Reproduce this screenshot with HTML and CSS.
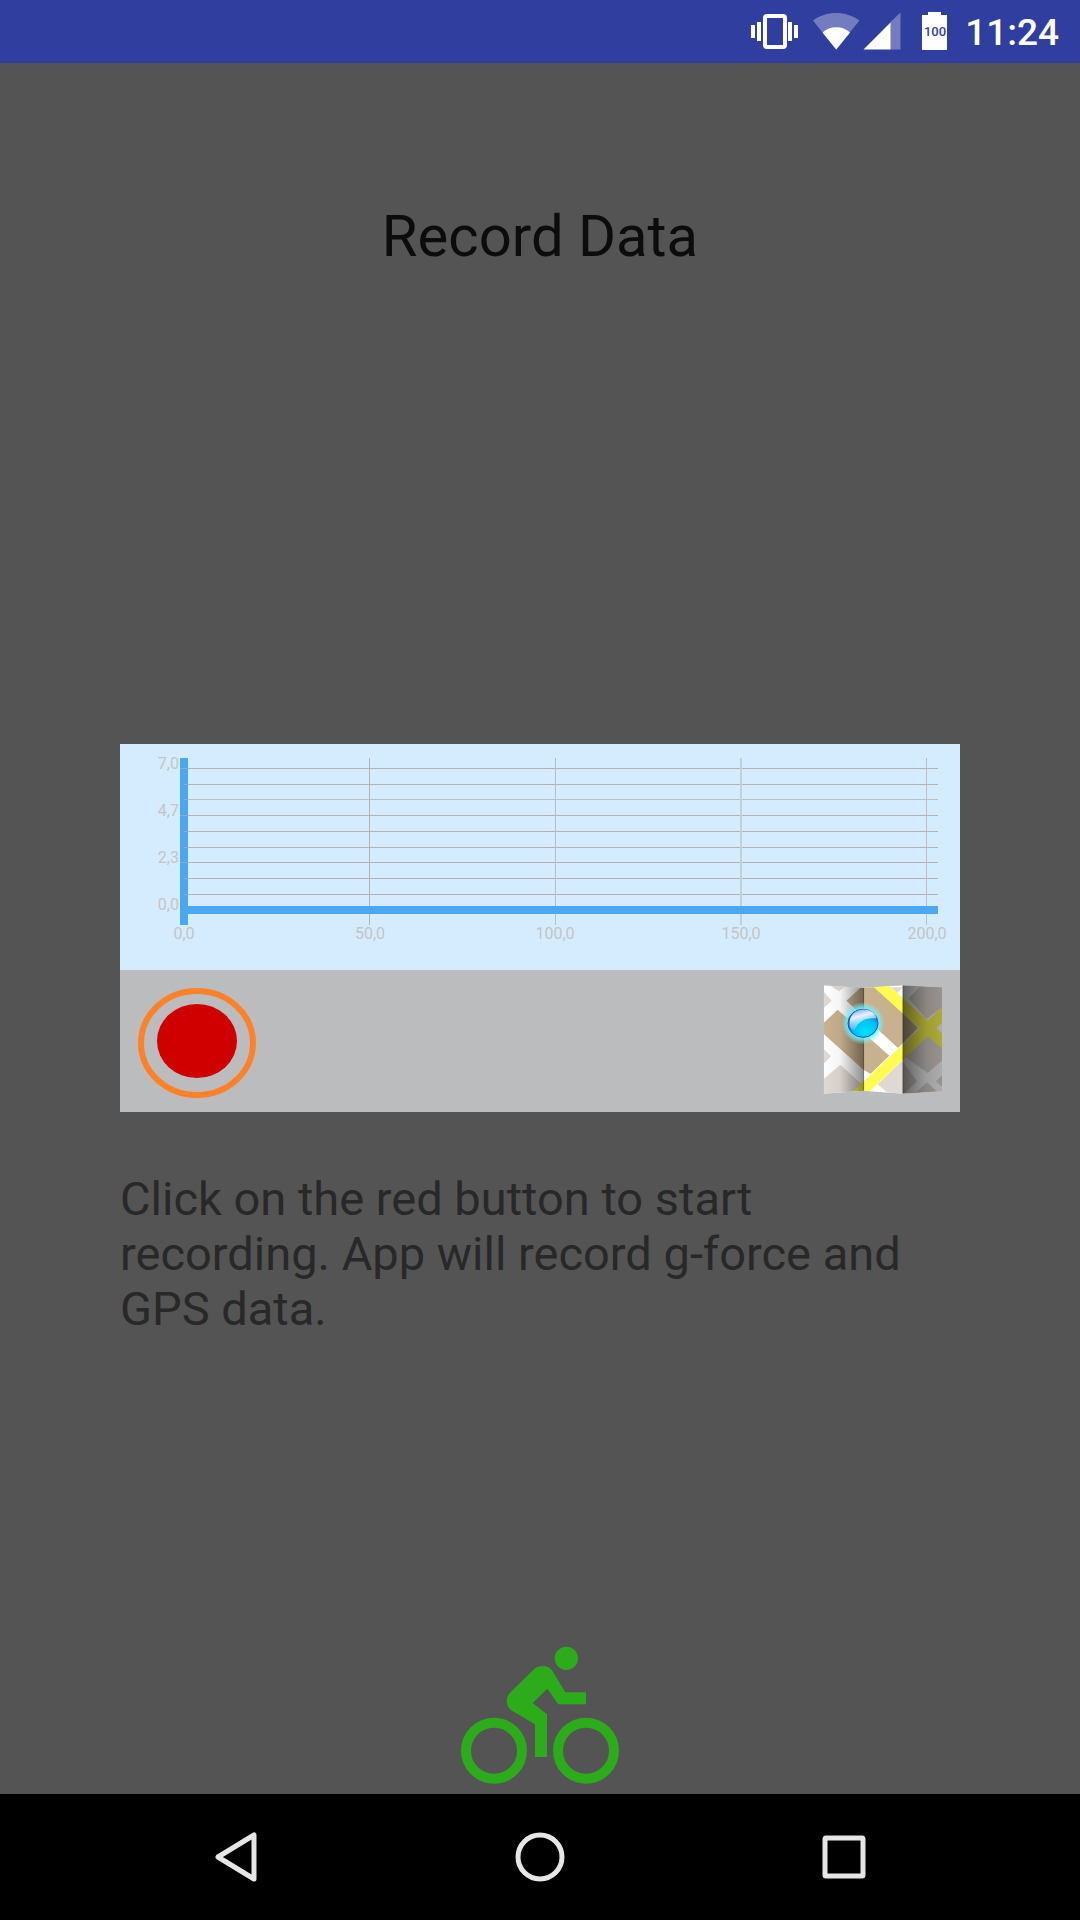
FILE: index.html
```html
<!DOCTYPE html>
<html lang="en">
<head>
<meta charset="utf-8">
<meta name="viewport" content="width=device-width, initial-scale=1">
<title>Record Data</title>
<link rel="stylesheet" href="styles.css">
</head>
<body>
<header class="status-bar">
  <svg class="status-icon" width="48" height="38" viewBox="0 0 48 38" aria-label="Vibrate" role="img">
    <rect x="14" y="4" width="20" height="31" rx="2" fill="none" stroke="#fff" stroke-width="4"/>
    <path fill="#fff" d="M0 13h4v13H0zM6 10h4v19H6zM37 10h4v19h-4zM43 13h4v13h-4z"/>
  </svg>
  <div class="signals">
    <svg class="status-icon" width="47" height="38" viewBox="0 0 47 38" aria-label="Wi-Fi" role="img">
      <path fill="#fff" fill-opacity=".32" d="M23.200 37.500L0 8.500C13-1.500 33-1.500 46.400 8.500z"/>
      <path fill="#fff" d="M23.200 37.500L9.500 20.500C17 13.500 29.500 13.500 37 20.500z"/>
    </svg>
    <svg class="status-icon" width="38" height="38" viewBox="0 0 38 38" aria-label="Mobile signal" role="img">
      <path fill="#fff" fill-opacity=".32" d="M27 10.500L37.500.500v37H27z"/>
      <path fill="#fff" d="M.500 37.500L27.500 10.500v27z"/>
    </svg>
  </div>
  <svg class="status-icon battery" width="25" height="38" viewBox="0 0 25 38" aria-label="Battery" role="img">
    <path fill="#fff" d="M6 0h13v3h6v35H0V3h6z"/>
    <text class="battery-level" x="13" y="24">100</text>
  </svg>
  <time class="clock">11:24</time>
</header>

<main class="screen">
  <h1 class="title">Record Data</h1>

  <section class="recorder">
    <svg class="chart" viewBox="0 0 840 226" role="img" aria-label="G-force chart">
      <clipPath id="plot"><rect width="826" height="226"/></clipPath>
      <path class="axis" d="M60 14h8v167h-8z"/>
      <path class="grid" d="M68 24.500H818M68 40.500H818M68 71.500H818M68 87.500H818M68 103.500H818M68 118.500H818M68 134.500H818M68 150.500H818M249.500 14V181"/>
      <path class="grid faint" d="M68 55.500H818M435.500 14V181M806.500 14V181"/>
      <path class="grid wide" d="M621 14V181"/>
      <path class="grid overlay" d="M60 24.500h8M64 40.500h4M64 55.500h4M60 71.500h8M64 87.500h4M64 103.500h4M60 118.500h8M64 134.500h4M64 150.500h4"/>
      <path class="axis" d="M64 162h754v8H64z"/>
      <g class="label label-y">
        <text x="59" y="25">7,0</text>
        <text x="59" y="72">4,7</text>
        <text x="59" y="119">2,3</text>
        <text x="59" y="166">0,0</text>
      </g>
      <g class="label label-x" clip-path="url(#plot)">
        <text x="64" y="195">0,0</text>
        <text x="250" y="195">50,0</text>
        <text x="435" y="195">100,0</text>
        <text x="621" y="195">150,0</text>
        <text x="807" y="195">200,0</text>
      </g>
    </svg>
    <div class="toolbar">
      <button class="tool" type="button" aria-label="Record">
        <svg width="118" height="114" viewBox="0 0 118 114">
          <ellipse cx="59" cy="59" rx="56" ry="52" fill="none" stroke="#ff8127" stroke-width="6"/>
          <ellipse cx="59" cy="57" rx="40" ry="37" fill="#d00000"/>
        </svg>
      </button>
      <button class="tool" type="button" aria-label="Map">
        <svg width="119" height="112" viewBox="68 76 357 336">
          <defs>
            <clipPath id="sheet"><path d="M70 77L190 85 307 77 426 83V395L307 402 190 393 70 402z"/></clipPath>
            <linearGradient id="fold-left"><stop offset="0" stop-opacity="0"/><stop offset=".4" stop-opacity=".04"/><stop offset="1" stop-opacity=".45"/></linearGradient>
            <linearGradient id="fold-right"><stop offset="0" stop-opacity=".62"/><stop offset=".6" stop-opacity=".38"/><stop offset="1" stop-opacity=".32"/></linearGradient>
            <radialGradient id="glow"><stop offset=".7" stop-color="#5ff4ff" stop-opacity=".9"/><stop offset="1" stop-color="#8ff8ff" stop-opacity="0"/></radialGradient>
            <radialGradient id="ball" cx=".6" cy=".8" r=".75"><stop offset="0" stop-color="#00e4ff"/><stop offset=".55" stop-color="#00bdff"/><stop offset="1" stop-color="#1a50c8"/></radialGradient>
            <linearGradient id="shine" x1=".2" y1="0" x2=".55" y2="1"><stop offset="0" stop-color="#fff" stop-opacity=".5"/><stop offset=".35" stop-color="#fff" stop-opacity=".9"/><stop offset="1" stop-color="#fff" stop-opacity="0"/></linearGradient>
          </defs>
          <g clip-path="url(#sheet)">
            <path fill="#fff" d="M70 76h357v327H70z"/>
            <path fill="#e0d8d2" d="M86 76h52l-22 19zM70 96l24 27-24 23zM70 268l22 22-22 22zM120 315l96 88H70V358zM305 304l46 61-42 38h-44l-33-29zM272 83h36l-18 18zM360 80h67v62l-49 36-54-62zM427 264l-49-44-72 66 76 54 45-39zM380 368l38 35h-76zM427 344l-20 21 20 18z"/>
            <path fill="#c8b18f" d="M138 123l46-42h42l127 124-60 60zM70 190l42-40 155 138-56 54-21-11L70 223z"/>
            <path fill="none" stroke="#fffb50" stroke-width="34" d="M232 70L440 258M160 417L440 152"/>
            <path fill="url(#fold-left)" d="M70 76h121v327H70z"/>
            <path fill="url(#fold-right)" d="M307 76h120v327H307z"/>
            <path fill="none" stroke="#000" stroke-opacity=".3" stroke-width="2" d="M190 84V394M308 76V403"/>
          </g>
          <circle cx="188" cy="191" r="64" fill="url(#glow)"/>
          <ellipse cx="188" cy="191" rx="45" ry="42" fill="url(#ball)" stroke="#1857b8" stroke-width="3"/>
          <path fill="url(#shine)" d="M148 196C143 138 222 138 228 176C196 173 175 184 163 211C156 212 149 205 148 196z"/>
        </svg>
      </button>
    </div>
  </section>

  <p class="hint">Click on the red button to start recording. App will record g-force and GPS data.</p>

  <svg class="cyclist" width="158" height="138" viewBox="63 48 474 414" aria-hidden="true">
    <g fill="none" stroke="#2cab1b" stroke-width="30">
      <circle cx="162" cy="362" r="84"/>
      <circle cx="438" cy="362" r="84"/>
    </g>
    <circle cx="379" cy="85" r="35" fill="#2cab1b"/>
    <path fill="#2cab1b" d="M285 381V283L217 243C196 229 196 204 210 188L285 115C296 105 324 104 336 121L376 187H438V223H355L322 176 278 219 321 253V381z"/>
  </svg>
</main>

<nav class="nav-bar" aria-label="System">
  <button class="nav-button" type="button" aria-label="Back">
    <svg width="50" height="50" viewBox="0 0 50 50"><path d="M7 25L43 3V47z"/></svg>
  </button>
  <button class="nav-button" type="button" aria-label="Home">
    <svg width="50" height="50" viewBox="0 0 50 50"><circle cx="25" cy="25" r="22"/></svg>
  </button>
  <button class="nav-button" type="button" aria-label="Recent apps">
    <svg width="50" height="50" viewBox="0 0 50 50"><rect x="6" y="6" width="38" height="38" rx="1"/></svg>
  </button>
</nav>
</body>
</html>
```
FILE: styles.css
```css
* {
  box-sizing: border-box;
}

body {
  margin: 0;
  min-height: 100vh;
  display: flex;
  flex-direction: column;
  background: #545454;
  font-family: Roboto, "Liberation Sans", sans-serif;
}

svg {
  display: block;
}

button {
  padding: 0;
  border: 0;
  background: none;
  cursor: pointer;
}

.status-bar {
  height: 63px;
  padding: 12px 21px 0;
  display: flex;
  align-items: flex-start;
  justify-content: flex-end;
  background: #303f9f;
  color: #fff;
}

.status-icon {
  flex: none;
}

.signals {
  display: flex;
  gap: 3px;
  margin: 0 21px 0 14px;
}

.battery-level {
  font-size: 13px;
  font-weight: 500;
  text-anchor: middle;
  fill: #303f9f;
}

.clock {
  margin-left: 18px;
  font-size: 37px;
  font-weight: 500;
  line-height: 42px;
}

.screen {
  flex: 1;
  display: flex;
  flex-direction: column;
  padding: 139px 120px 10px;
}

.title {
  margin: 0 0 474px;
  font-size: 58px;
  font-weight: 400;
  line-height: 68px;
  text-align: center;
  color: #0c0c0c;
}

.recorder {
  background: #d5ecff;
}

.chart {
  width: 100%;
}

.axis {
  fill: #4aa8f0;
}

.grid {
  fill: none;
  stroke: #b0b4b8;
  stroke-width: 1;
}

.faint {
  stroke: #b8c0c6;
}

.wide {
  stroke: #c4d0d9;
  stroke-width: 2;
}

.overlay {
  stroke: #7fb0d8;
}

.label {
  font-size: 16px;
  fill: #c4c4c4;
}

.label-x {
  text-anchor: middle;
}

.label-y {
  text-anchor: end;
}

.toolbar {
  height: 142px;
  padding: 0 18px;
  display: flex;
  align-items: center;
  justify-content: space-between;
  background: #babcbe;
}

.hint {
  margin: 59px 0 40px;
  font-size: 47px;
  line-height: 55px;
  color: #282828;
}

.cyclist {
  margin: auto auto 0;
}

.nav-bar {
  height: 126px;
  padding: 0 84px;
  display: grid;
  grid-template-columns: repeat(3, 1fr);
  background: #000;
}

.nav-button {
  display: flex;
  align-items: center;
  justify-content: center;
}

.nav-button svg {
  fill: none;
  stroke: #e6e6e6;
  stroke-width: 5;
  stroke-linejoin: round;
}
```
